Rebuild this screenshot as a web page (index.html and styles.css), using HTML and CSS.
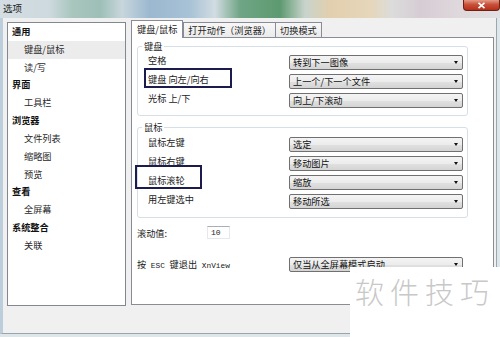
FILE: index.html
```html
<!DOCTYPE html>
<html lang="zh-CN">
<head>
  <meta charset="UTF-8" />
  <title>选项</title>
  <link rel="stylesheet" href="styles.css">
</head>
<body>

  <div class="titlebar">
    <span class="title">选项</span>
    <span class="close">
      <svg width="9" height="7" viewBox="0 0 9 7"><path d="M1.5 0.8 L7.5 6.2 M7.5 0.8 L1.5 6.2" stroke="#fff" stroke-width="1.6" /></svg>
    </span>
  </div>

  <div class="frame">
    <!-- left tree -->
    <ul class="tree">
      <li class="group">通用</li>
      <li class="item selected">键盘/鼠标</li>
      <li class="item">读/写</li>
      <li class="group">界面</li>
      <li class="item">工具栏</li>
      <li class="group">浏览器</li>
      <li class="item">文件列表</li>
      <li class="item">缩略图</li>
      <li class="item">预览</li>
      <li class="group">查看</li>
      <li class="item">全屏幕</li>
      <li class="group">系统整合</li>
      <li class="item">关联</li>
    </ul>

    <!-- tabs -->
    <div class="tabs">
      <div class="tab-strip">
        <span class="tab active">键盘/鼠标</span>
        <span class="tab">打开动作（浏览器）</span>
        <span class="tab">切换模式</span>
      </div>

      <div class="tab-panel">
        <fieldset class="box">
          <legend>键盘</legend>
          <div class="row"><span class="label">空格</span><div class="combo">转到下一图像<i class="arrow"></i></div></div>
          <div class="row"><span class="label mark mark-keys">键盘 向左/向右</span><div class="combo">上一个/下一个文件<i class="arrow"></i></div></div>
          <div class="row"><span class="label">光标 上/下</span><div class="combo">向上/下滚动<i class="arrow"></i></div></div>
        </fieldset>

        <fieldset class="box box-mouse">
          <legend>鼠标</legend>
          <div class="row"><span class="label">鼠标左键</span><div class="combo">选定<i class="arrow"></i></div></div>
          <div class="row"><span class="label">鼠标右键</span><div class="combo">移动图片<i class="arrow"></i></div></div>
          <div class="row"><span class="label mark mark-wheel">鼠标滚轮</span><div class="combo">缩放<i class="arrow"></i></div></div>
          <div class="row"><span class="label">用左键选中</span><div class="combo">移动所选<i class="arrow"></i></div></div>
        </fieldset>

        <div class="field scroll-row">
          <span class="field-label short">滚动值:</span>
          <span class="textbox">10</span>
        </div>

        <div class="field esc-row">
          <span class="field-label long">按<span class="latin"> ESC </span>键退出<span class="latin"> XnView</span></span>
          <div class="combo">仅当从全屏幕模式启动<i class="arrow"></i></div>
        </div>
      </div>
    </div>
  </div>

  <div class="watermark">软件技巧</div>

</body>
</html>
```

FILE: styles.css
```css
/* Page / desktop behind the window */
body {
  margin: 0;
  width: 500px;
  height: 337px;
  overflow: hidden;
  position: relative;
  font-family: "Noto Sans CJK SC", sans-serif;
  font-size: 9.2px;
  color: #1e1e1e;
  background:
    linear-gradient(to right,
      #d4dde3 0px, #cdd9de 50px, #a9c6bd 72px, #9dbfb7 100px, #c8d6dc 122px,
      #9bb8d0 150px, #a8c2d6 190px, #d2dce2 215px, #6fa585 240px, #5d9a70 280px,
      #c8d4cc 305px, #e2cfae 330px, #e6d6ba 370px, #dcdcdc 392px, #d6cdd4 420px,
      #dfd8dc 460px, #e0e0e4 500px) top left / 100% 18px no-repeat,
    #dfe6ea;
}

/* Title bar */
.titlebar {
  height: 18px;
  display: flex;
  align-items: flex-start;
}
.title {
  padding-left: 3px;
  line-height: 16px;
  font-size: 9.5px;
  color: #1a1a1a;
}
.close {
  margin-left: auto;
  box-sizing: border-box;
  width: 37px;
  height: 11px;
  border: 1px solid #6d2013;
  border-top: none;
  border-radius: 0 0 4px 4px;
  background: linear-gradient(#e39a86, #c9513a 45%, #b3301a);
  display: flex;
  align-items: center;
  justify-content: center;
}

/* Dialog body */
.frame {
  box-sizing: border-box;
  width: 497px;
  height: 316px;
  background: #f0f0f0;
  border-left: 3px solid #bccddb;
  border-right: 1px solid #9aa6b0;
  border-bottom: 1px solid #98a4ae;
  padding: 2px 2px 0 4px;
  display: flex;
  align-items: flex-start;
  gap: 5px;
}

/* Tree on the left */
.tree {
  box-sizing: border-box;
  width: 119px;
  height: 284px;
  margin: 2px 0 0 0;
  padding: 0;
  list-style: none;
  background: #fff;
  border: 1px solid #828790;
}
.tree li {
  height: 17.83px;
  line-height: 17.83px;
  white-space: nowrap;
}
.tree .group {
  padding-left: 4px;
  font-weight: bold;
  color: #111;
}
.tree .item {
  padding-left: 16px;
  color: #2a2a2a;
}
.tree .selected {
  background: #ececec;
}

/* Tabs */
.tabs {
  width: 363px;
  display: flex;
  flex-direction: column;
}
.tab-strip {
  height: 18px;
  display: flex;
  align-items: flex-start;
  position: relative;
  z-index: 1;
}
.tab {
  box-sizing: border-box;
  border: 1px solid #898c95;
  border-bottom: none;
  padding: 0 4px;
  white-space: nowrap;
}
.tab + .tab {
  margin-left: -1px;
}
.tab.active {
  height: 18px;
  line-height: 17px;
  padding: 0 5px;
  background: #fff;
}
.tab:not(.active) {
  margin-top: 2px;
  height: 15px;
  line-height: 14px;
  background: linear-gradient(#f7f7f7, #ebebeb);
}
.tab.active + .tab {
  margin-left: 0;
}

.tab-panel {
  box-sizing: border-box;
  height: 268px;
  margin-top: -1px;
  padding: 2px 0 0 5px;
  background: #fff;
  border: 1px solid #898c95;
}

/* Group boxes */
.box {
  box-sizing: border-box;
  width: 331px;
  margin: 0;
  padding: 3px 4px 7px 4px;
  border: 1px solid #d5dfe5;
  border-radius: 3px;
}
.box legend {
  padding: 0 2px;
  line-height: 12px;
  color: #1e1e1e;
}
.box-mouse {
  margin-top: 5px;
  padding-top: 4px;
  padding-bottom: 8px;
}

.row {
  height: 15px;
  display: flex;
  align-items: center;
}
.row + .row {
  margin-top: 4px;
}
.label {
  margin-left: 6px;
  margin-bottom: 4px;
  line-height: 15px;
  white-space: nowrap;
  color: #222;
}

/* Combo boxes */
.combo {
  box-sizing: border-box;
  width: 174px;
  height: 15px;
  margin-left: auto;
  padding-left: 3px;
  display: flex;
  align-items: center;
  line-height: 13px;
  white-space: nowrap;
  color: #111;
  border: 1px solid #707070;
  border-radius: 2px;
  background: linear-gradient(#f4f4f4, #ececec 50%, #e0e0e0 55%, #d4d4d4);
}
.arrow {
  margin-left: auto;
  margin-right: 4px;
  width: 0;
  height: 0;
  border-left: 2.5px solid transparent;
  border-right: 2.5px solid transparent;
  border-top: 3px solid #111;
}

/* Plain fields under the groups */
.field {
  display: flex;
  align-items: center;
}
.scroll-row {
  margin-top: 8px;
  height: 13px;
}
.esc-row {
  margin-top: 18px;
  height: 15px;
}
.field-label {
  white-space: nowrap;
  color: #222;
}
.field-label.short {
  width: 70px;
}
.field-label.long {
  width: 152px;
  margin-bottom: 2px;
}
.field .combo {
  margin-left: 0;
}
.latin {
  font-family: "Liberation Mono", monospace;
  font-size: 7.8px;
}
.textbox {
  box-sizing: border-box;
  width: 23px;
  height: 13px;
  padding-left: 3px;
  line-height: 11px;
  font-family: "Liberation Mono", monospace;
  font-size: 8px;
  border: 1px solid #e3e9ef;
  border-top-color: #abadb3;
}

/* Annotation rectangles drawn over the labels */
.mark {
  position: relative;
}
.mark::after {
  content: "";
  position: absolute;
  box-sizing: border-box;
  border: 2px solid #1b1b4d;
}
.mark-keys::after {
  left: -4px;
  top: -4px;
  width: 88px;
  height: 20px;
}
.mark-wheel::after {
  left: -13px;
  top: -8px;
  width: 67px;
  height: 24px;
}

/* Site watermark, bottom right */
.watermark {
  position: absolute;
  left: 350px;
  top: 267px;
  width: 150px;
  height: 70px;
  box-sizing: border-box;
  padding-left: 5px;
  background: #fff;
  font-size: 29px;
  line-height: 48px;
  letter-spacing: 6px;
  font-weight: 300;
  color: #c8c8c8;
  white-space: nowrap;
}
```
